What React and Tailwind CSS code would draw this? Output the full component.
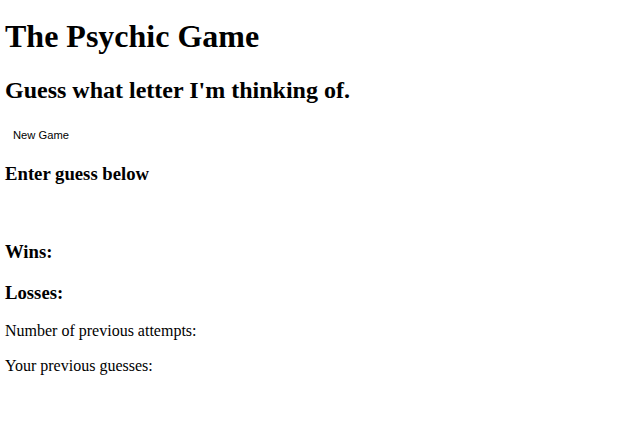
import React from 'react';

const serif = { fontFamily: '"Liberation Serif", "Times New Roman", serif' };

export default function App() {
    return (
        <div className="min-h-[448px] bg-white text-black pl-[5px] pt-[17px]" style={serif}>
            <h1 className="text-[32px] leading-[38px] font-bold">The Psychic Game</h1>
            <h2 className="mt-[21px] text-[24px] leading-[28px] font-bold">Guess what letter I'm thinking of.</h2>
            <button
                className="block mt-[25px] px-[8px] text-[11.2px] leading-[13px] text-black"
                style={{ fontFamily: '"Liberation Sans", Arial, sans-serif' }}
            >
                New Game
            </button>
            <h3 className="mt-[21px] text-[18.72px] leading-[22px] font-bold">Enter guess below</h3>
            <h3 className="mt-[56px] text-[18.72px] leading-[22px] font-bold">Wins:</h3>
            <h3 className="mt-[19px] text-[18.72px] leading-[22px] font-bold">Losses:</h3>
            <p className="mt-[18px] text-[16px] leading-[18px]">Number of previous attempts:</p>
            <p className="mt-[17px] text-[16px] leading-[18px]">Your previous guesses:</p>
        </div>
    );
}
